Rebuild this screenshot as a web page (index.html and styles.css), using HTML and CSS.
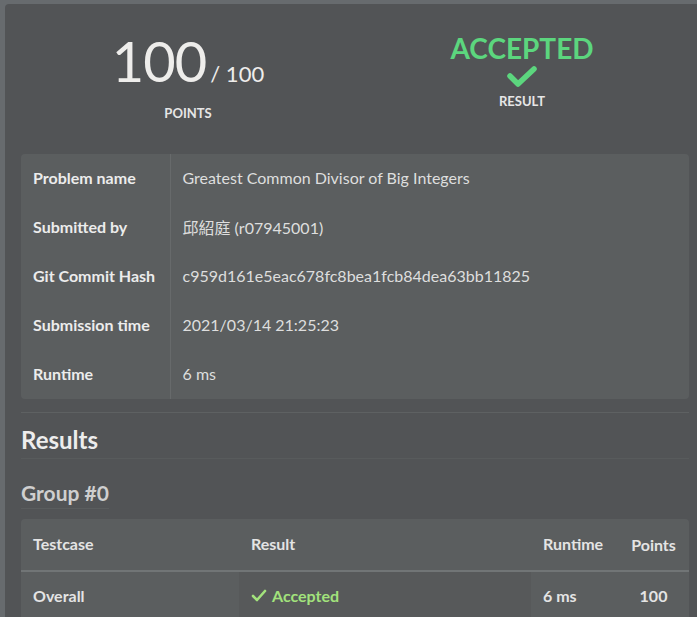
FILE: index.html
```html
<!DOCTYPE html>
<html>
<head>
<meta charset="utf-8">
<link rel="stylesheet" href="styles.css">
</head>
<body>
<div class="card">
  <div class="stats">
    <div class="stat">
      <div class="score"><span class="big">100</span><span class="total">/ 100</span></div>
      <div class="caption points-cap">POINTS</div>
    </div>
    <div class="stat">
      <div class="verdict">ACCEPTED</div>
      <svg class="bigcheck" width="32" height="22" viewBox="0 0 32 22"><polyline points="4,11 12,19 28,4" fill="none" stroke="#5cd67e" stroke-width="5.5" stroke-linecap="round" stroke-linejoin="round"/></svg>
      <div class="caption result-cap">RESULT</div>
    </div>
  </div>

  <table class="info">
    <tr><th>Problem name</th><td>Greatest Common Divisor of Big Integers</td></tr>
    <tr><th>Submitted by</th><td>邱紹庭 (r07945001)</td></tr>
    <tr><th>Git Commit Hash</th><td>c959d161e5eac678fc8bea1fcb84dea63bb11825</td></tr>
    <tr><th>Submission time</th><td>2021/03/14 21:25:23</td></tr>
    <tr><th>Runtime</th><td>6 ms</td></tr>
  </table>

  <hr class="rule">
  <h2 class="results-title">Results</h2>
  <h3 class="group-title"><span>Group #0</span></h3>

  <table class="results">
    <thead>
      <tr><th class="c-case">Testcase</th><th class="c-res">Result</th><th class="c-time">Runtime</th><th class="c-pts">Points</th></tr>
    </thead>
    <tbody>
      <tr>
        <td class="c-case">Overall</td>
        <td class="c-res res-cell"><span class="ok"><svg width="16" height="13" viewBox="0 0 16 13"><polyline points="2,7 6,11 14,2" fill="none" stroke="#a2e27c" stroke-width="2.6" stroke-linecap="round" stroke-linejoin="round"/></svg>Accepted</span></td>
        <td class="c-time">6 ms</td>
        <td class="c-pts">100</td>
      </tr>
    </tbody>
  </table>
</div>
</body>
</html>
```

FILE: styles.css
```css
html, body {
  margin: 0;
  padding: 0;
  background: #676b6e;
  font-family: Lato, "Noto Sans CJK TC", sans-serif;
  overflow: hidden;
}
.card {
  margin: 4px 0 0 5px;
  background: #525456;
  border-radius: 4px 0 0 0;
  padding: 0 8px 40px 16px;
  min-height: 620px;
  box-sizing: border-box;
}
.stats {
  display: flex;
  height: 146px;
}
.stat {
  flex: 1;
  display: flex;
  flex-direction: column;
  align-items: center;
}
.score {
  margin-top: 29px;
  color: #eeedeb;
  line-height: 56px;
  height: 56px;
}
.big {
  font-size: 56px;
  letter-spacing: -1px;
}
.total {
  font-size: 22px;
  margin-left: 4px;
}
.caption {
  font-size: 13px;
  font-weight: 700;
  color: #e6e6e6;
  line-height: 16px;
}
.points-cap {
  margin-top: 16px;
}
.verdict {
  margin-top: 30px;
  font-size: 28px;
  line-height: 28px;
  font-weight: 700;
  color: #5cd67e;
}
.bigcheck {
  display: block;
  margin-top: 3px;
}
.result-cap {
  margin-top: 6px;
}
table {
  border-collapse: collapse;
  width: 100%;
  font-size: 16px;
}
.info {
  background: #5b5e5f;
  border-radius: 4px;
  overflow: hidden;
  margin-top: 4px;
}
.info th, .info td {
  height: 49px;
  padding: 0 12px 2px;
  text-align: left;
  vertical-align: middle;
  box-sizing: border-box;
}
.info th {
  width: 149px;
  font-weight: 700;
  color: #ececec;
  border-right: 1px solid #676a6b;
  white-space: nowrap;
}
.info td {
  color: #dedede;
}
.rule {
  border: 0;
  border-top: 1px solid #5e6162;
  margin: 13px 0 0 0;
}
.results-title {
  margin: 0;
  font-size: 24px;
  font-weight: 700;
  color: #ededed;
  line-height: 29px;
  padding-top: 12px;
  padding-bottom: 4px;
  border-bottom: 1px solid #585b5c;
}
.group-title {
  margin: 0;
  padding-top: 22px;
  font-size: 21px;
  font-weight: 700;
  color: #cfcfcf;
  line-height: 24px;
}
.group-title span {
  display: inline-block;
  padding-bottom: 3px;
  border-bottom: 1px solid #5a5d5e;
}
.results {
  margin-top: 10px;
  background: #5b5e5f;
  border-radius: 4px 4px 0 0;
  overflow: hidden;
}
.results th, .results td {
  text-align: left;
  padding: 0 12px;
  font-weight: 700;
  color: #e4e4e4;
}
.results thead th {
  height: 52px;
  padding-bottom: 2px;
  border-bottom: 2px solid #717576;
  box-sizing: border-box;
}
.results td {
  height: 47px;
}
.c-case { width: 194px; }
.c-res { width: 268px; }
.c-time { width: 63px; }
.results .c-pts { text-align: center; padding: 0 8px; }
.res-cell { background: #57595a; }
.ok {
  color: #a2e27c;
  display: inline-flex;
  align-items: center;
  gap: 5px;
}
.ok svg { display: block; }
```
